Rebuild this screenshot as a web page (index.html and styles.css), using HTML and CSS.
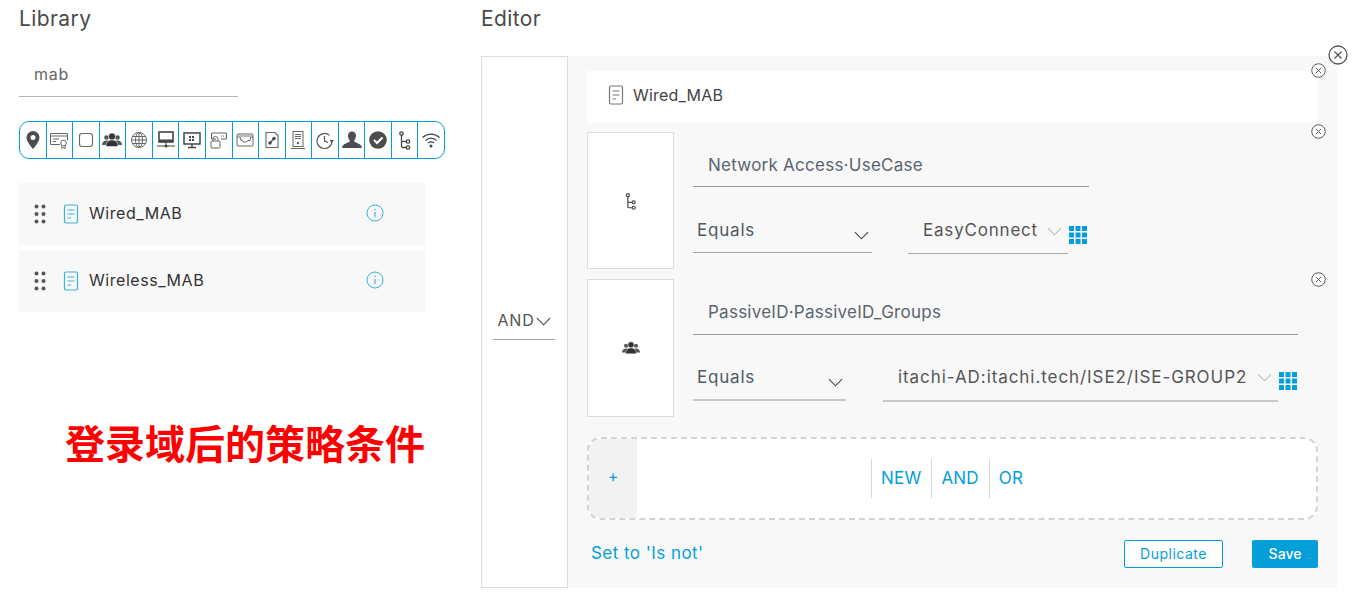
FILE: index.html
```html
<!DOCTYPE html>
<html lang="en">
<head>
  <meta charset="UTF-8">
  <meta name="viewport" content="width=device-width, initial-scale=1.0">
  <title>Conditions Studio</title>
  <link rel="stylesheet" href="styles.css">
</head>
<body>

  <svg class="sprites" width="0" height="0">
    <symbol id="i-group" viewBox="0 0 20 20">
      <circle cx="4.500" cy="7.500" r="2.300" fill="#555"/>
      <circle cx="15.500" cy="7.500" r="2.300" fill="#555"/>
      <path d="M0 15c0-3 2-4.500 4.500-4.500S8 12 8 15z" fill="#555"/>
      <path d="M12 15c0-3 1-4.500 3.500-4.500S20 12 20 15z" fill="#555"/>
      <circle cx="10" cy="6.500" r="3.400" fill="#333" stroke="#fff" stroke-width=".5"/>
      <path d="M4 16.500c0-4.500 2.500-6.500 6-6.500s6 2 6 6.500z" fill="#333" stroke="#fff" stroke-width=".5"/>
    </symbol>
    <symbol id="i-branch" viewBox="0 0 20 20">
      <g fill="none" stroke="#444" stroke-width="1.300">
        <path d="M6.500 5v11c0 1 .5 1.500 1.500 1.500h3.500"/>
        <path d="M6.500 11.500h5"/>
        <circle cx="6.500" cy="3.500" r="1.700"/>
        <circle cx="13" cy="11.500" r="1.700"/>
        <circle cx="13" cy="17.500" r="1.700"/>
      </g>
    </symbol>
    <symbol id="i-doc" viewBox="0 0 16 20">
      <rect x="1.500" y="1" width="13" height="18" rx="1.500" fill="none" stroke="currentColor" stroke-width="1.200"/>
      <path d="M4.500 6h7M4.500 10h7M4.500 14h3.500" stroke="currentColor" stroke-width="1.200" fill="none"/>
    </symbol>
    <symbol id="i-grid" viewBox="0 0 18 18">
      <g fill="#049fd9">
        <rect x="0" y="0" width="5" height="5"/><rect x="6.500" y="0" width="5" height="5"/><rect x="13" y="0" width="5" height="5"/>
        <rect x="0" y="6.500" width="5" height="5"/><rect x="6.500" y="6.500" width="5" height="5"/><rect x="13" y="6.500" width="5" height="5"/>
        <rect x="0" y="13" width="5" height="5"/><rect x="6.500" y="13" width="5" height="5"/><rect x="13" y="13" width="5" height="5"/>
      </g>
    </symbol>
    <symbol id="i-close" viewBox="0 0 20 20">
      <circle cx="10" cy="10" r="9" fill="#fff" stroke="#555" stroke-width="1.300"/>
      <path d="M6.500 6.500l7 7M13.500 6.500l-7 7" stroke="#555" stroke-width="1.300"/>
    </symbol>
    <symbol id="i-info" viewBox="0 0 18 18">
      <circle cx="9" cy="9" r="8" fill="none" stroke="#39b3e2" stroke-width="1"/>
      <path d="M9 8v5" stroke="#39b3e2" stroke-width="1.200"/>
      <circle cx="9" cy="5.500" r=".8" fill="#39b3e2"/>
    </symbol>
    <symbol id="i-chev" viewBox="0 0 16 9">
      <path d="M1 1l7 7 7-7" fill="none" stroke="currentColor" stroke-width="1.200"/>
    </symbol>
    <symbol id="i-drag" viewBox="0 0 12 20">
      <g fill="#555">
        <circle cx="2.500" cy="2.500" r="2"/><circle cx="9.500" cy="2.500" r="2"/>
        <circle cx="2.500" cy="10" r="2"/><circle cx="9.500" cy="10" r="2"/>
        <circle cx="2.500" cy="17.500" r="2"/><circle cx="9.500" cy="17.500" r="2"/>
      </g>
    </symbol>
  </svg>

  <div class="library">
    <h2>Library</h2>
    <div class="search">mab</div>

    <div class="toolbar">
      <!-- location -->
      <span><svg viewBox="0 0 20 20"><path fill-rule="evenodd" d="M10 1a6.500 6.500 0 0 0-6.500 6.500C3.500 12 10 19 10 19s6.500-7 6.500-11.500A6.500 6.500 0 0 0 10 1zm0 4a2.500 2.500 0 1 1 0 5 2.500 2.500 0 0 1 0-5z" fill="#4d4d4d"/></svg></span>
      <!-- certificate -->
      <span><svg viewBox="0 0 20 20"><g fill="none" stroke="#666" stroke-width="1"><path d="M11 14.500H1.500v-11h17v7"/><path d="M1.500 6h17M4 9h6M4 11.500h3"/><circle cx="14.500" cy="13" r="2.800"/><path d="M12.800 15.500v3l1.700-1 1.700 1v-3"/></g></svg></span>
      <!-- endpoint -->
      <span><svg viewBox="0 0 20 20"><rect x="3.500" y="3.500" width="13" height="13" rx="2.500" fill="none" stroke="#666" stroke-width="1.100"/></svg></span>
      <span><svg viewBox="0 0 20 20"><use href="#i-group"/></svg></span>
      <!-- globe -->
      <span><svg viewBox="0 0 20 20"><g fill="none" stroke="#666" stroke-width="1"><circle cx="10" cy="10" r="7.500"/><ellipse cx="10" cy="10" rx="3.500" ry="7.500"/><path d="M10 2.500v15M2.500 10h15M3.500 6.500h13M3.500 13.500h13"/></g></svg></span>
      <!-- device with network -->
      <span><svg viewBox="0 0 20 20"><rect x="3" y="2" width="14" height="10" fill="none" stroke="#444" stroke-width="1.600"/><rect x="3" y="9.500" width="14" height="2.500" fill="#444"/><path d="M10 12v5M1 16h18" stroke="#444"/><circle cx="10" cy="16" r="1.500" fill="#444"/></svg></span>
      <!-- desktop -->
      <span><svg viewBox="0 0 20 20"><rect x="2" y="3" width="16" height="11" fill="none" stroke="#444" stroke-width="1.500"/><path d="M10 14v3M6 17.500h8" stroke="#444" stroke-width="1.400"/><g fill="#444"><rect x="7" y="6" width="2" height="2"/><rect x="10" y="6" width="2" height="2"/><rect x="7" y="9" width="2" height="2"/><rect x="10" y="9" width="2" height="2"/></g></svg></span>
      <!-- lock + message -->
      <span><svg viewBox="0 0 20 20"><g fill="none" stroke="#666" stroke-width="1"><path d="M7 9H2.500V3h15v6H12"/><rect x="2" y="11" width="9" height="7" rx="1"/><path d="M4 11V9a2.500 2.500 0 0 1 5 0v2"/></g><path d="M12 6h4" stroke="#666" stroke-dasharray="1 1"/></svg></span>
      <!-- ethernet -->
      <span><svg viewBox="0 0 20 20"><g fill="none" stroke="#666" stroke-width="1"><rect x="2" y="4" width="16" height="12" rx="1"/><path d="M2 7h3M18 7h-3M5 7l1 3.500h1.500l1 1.500h3l1-1.500H15l1-3.500"/></g><rect x="3" y="5" width="14" height="2" fill="#bbb"/></svg></span>
      <!-- document link -->
      <span><svg viewBox="0 0 20 20"><path d="M4 2.500h9l3 3v12H4z" fill="none" stroke="#666" stroke-width="1.100"/><circle cx="8" cy="13" r="1.700" fill="#444"/><circle cx="12" cy="8.500" r="1.700" fill="#444"/><path d="M8 13l4-4.500" stroke="#444" stroke-width="1.200"/></svg></span>
      <!-- server -->
      <span><svg viewBox="0 0 20 20"><g fill="none" stroke="#666" stroke-width="1"><rect x="5" y="1.500" width="10" height="15"/><path d="M3 18.500h14M7 4.500h6M7 6.500h6M7 8.500h6"/></g><circle cx="10" cy="13" r="1.300" fill="#666"/></svg></span>
      <!-- time -->
      <span><svg viewBox="0 0 20 20"><g fill="none" stroke="#555" stroke-width="1.200"><path d="M17 11a7.500 7.500 0 1 1-2.500-5.600"/><path d="M9.500 6v5l3.500 1.500"/></g><path d="M14.500 10H19l-2.200 2.800z" fill="#555"/></svg></span>
      <!-- user -->
      <span><svg viewBox="0 0 20 20"><path d="M10 1.500c-2.600 0-4 2-4 4.300 0 2 1 3.500 1.800 4.500v1.200C6 13 .5 13.500 0 18h20c-.5-4.500-6-5-7.800-6.500v-1.200c.8-1 1.800-2.500 1.800-4.500 0-2.300-1.400-4.300-4-4.300z" fill="#4d4d4d"/></svg></span>
      <!-- check -->
      <span><svg viewBox="0 0 20 20"><circle cx="10" cy="10" r="8.800" fill="#4d4d4d"/><path d="M6 10l3 3 5.500-5.500" fill="none" stroke="#fff" stroke-width="2"/></svg></span>
      <span><svg viewBox="0 0 20 20"><use href="#i-branch"/></svg></span>
      <!-- wifi -->
      <span><svg viewBox="0 0 20 20"><g fill="none" stroke="#444" stroke-width="1.300"><path d="M1.500 7.500c5-4.500 12-4.500 17 0"/><path d="M4.500 10.500c3.500-3 7.500-3 11 0"/><path d="M7 13c2-1.500 4-1.500 6 0"/></g><circle cx="10" cy="16" r="1.500" fill="#444"/></svg></span>
    </div>

    <div class="lib-item">
      <svg class="drag"><use href="#i-drag"/></svg>
      <svg class="doc"><use href="#i-doc"/></svg>
      <span class="lib-name">Wired_MAB</span>
      <svg class="info"><use href="#i-info"/></svg>
    </div>
    <div class="lib-item">
      <svg class="drag"><use href="#i-drag"/></svg>
      <svg class="doc"><use href="#i-doc"/></svg>
      <span class="lib-name">Wireless_MAB</span>
      <svg class="info"><use href="#i-info"/></svg>
    </div>

    <div class="note">登录域后的策略条件</div>
  </div>

  <div class="editor">
    <h2>Editor</h2>
    <div class="editor-box">
      <div class="operator">
        <div class="op-select">AND<svg class="chev dark"><use href="#i-chev"/></svg></div>
      </div>

      <div class="panel">
        <svg class="close big"><use href="#i-close"/></svg>

        <div class="cond-name">
          <svg class="doc gray"><use href="#i-doc"/></svg>
          <span>Wired_MAB</span>
          <svg class="close small"><use href="#i-close"/></svg>
        </div>

        <div class="rule rule-a">
          <svg class="close small"><use href="#i-close"/></svg>
          <div class="rule-icon"><svg><use href="#i-branch"/></svg></div>
          <div class="rule-body">
            <div class="attr">Network Access·UseCase</div>
            <div class="rule-line">
              <div class="select sel">Equals<svg class="chev dark"><use href="#i-chev"/></svg></div>
              <div class="select val">EasyConnect<svg class="chev light"><use href="#i-chev"/></svg></div>
              <svg class="grid"><use href="#i-grid"/></svg>
            </div>
          </div>
        </div>

        <div class="rule rule-b">
          <svg class="close small"><use href="#i-close"/></svg>
          <div class="rule-icon"><svg><use href="#i-group"/></svg></div>
          <div class="rule-body">
            <div class="attr">PassiveID·PassiveID_Groups</div>
            <div class="rule-line">
              <div class="select sel">Equals<svg class="chev dark"><use href="#i-chev"/></svg></div>
              <div class="select val">itachi-AD:itachi.tech/ISE2/ISE-GROUP2<svg class="chev light"><use href="#i-chev"/></svg></div>
              <svg class="grid"><use href="#i-grid"/></svg>
            </div>
          </div>
        </div>

        <div class="add-box">
          <div class="add-plus">+</div>
          <div class="add-links">
            <a>NEW</a>
            <a>AND</a>
            <a>OR</a>
          </div>
        </div>

        <div class="actions">
          <a class="set-not">Set to 'Is not'</a>
          <button class="btn outline">Duplicate</button>
          <button class="btn solid">Save</button>
        </div>
      </div>
    </div>
  </div>

</body>
</html>
```

FILE: styles.css
```css
body {
  margin: 0;
  font-family: Inter, "Liberation Sans", sans-serif;
  background-color: #fff;
  color: #444;
  display: flex;
  height: 609px;
  overflow: hidden;
}
h2 {
  margin: 0;
  padding-top: 1px;
  font-size: 21px;
  font-weight: 400;
  line-height: 23px;
  letter-spacing: .4px;
  color: #4a4a4a;
}
.sprites {
  position: absolute;
}

/* library */
.library {
  width: 481px;
  box-sizing: border-box;
  padding: 6px 0 0 19px;
}
.search {
  width: 204px;
  margin-top: 21px;
  padding: 13px 0 12px 15px;
  border-bottom: 1px solid #b5b5b5;
  font-size: 16px;
  line-height: 20px;
  letter-spacing: .8px;
  color: #666;
}
.toolbar {
  display: flex;
  width: 426px;
  height: 38px;
  margin-top: 24px;
  box-sizing: border-box;
  border: 1px solid #049fd9;
  border-radius: 10px;
}
.toolbar span {
  flex: 1;
  display: flex;
  align-items: center;
  justify-content: center;
  border-left: 1px solid #049fd9;
}
.toolbar span:first-child {
  border-left: none;
}
.toolbar svg {
  width: 20px;
  height: 20px;
}
.lib-item {
  display: flex;
  align-items: center;
  width: 406px;
  height: 62px;
  margin-bottom: 5px;
  box-sizing: border-box;
  padding: 0 0 0 15px;
  background-color: #f8f8f8;
}
.toolbar + .lib-item {
  margin-top: 24px;
}
.drag {
  width: 12px;
  height: 20px;
}
.doc {
  width: 16px;
  height: 20px;
  margin-left: 17px;
  color: #39b3e2;
}
.lib-name {
  margin: 0 0 2px 10px;
  width: 277px;
  font-size: 16px;
  letter-spacing: .55px;
  color: #333;
}
.info {
  width: 18px;
  height: 18px;
  margin-bottom: 2px;
}
.note {
  margin: 105px 0 0 46px;
  font-family: "Noto Sans CJK SC", sans-serif;
  font-size: 40px;
  font-weight: 700;
  line-height: 50px;
  color: #f00;
  white-space: nowrap;
}

/* editor */
.editor {
  width: 856px;
  padding-top: 6px;
}
.editor-box {
  display: flex;
  height: 532px;
  margin-top: 26px;
}
.operator {
  width: 87px;
  box-sizing: border-box;
  padding: 0 2px 4px 0;
  border: 1px solid #ddd;
  display: flex;
  align-items: center;
  justify-content: center;
}
.op-select {
  display: flex;
  align-items: center;
  width: 62px;
  box-sizing: border-box;
  height: 40px;
  padding-left: 5px;
  border-bottom: 1px solid #aaa;
  font-size: 16px;
  letter-spacing: .8px;
  color: #555;
}
.op-select .chev {
  margin: 4px 0 0 1px;
}
.panel {
  position: relative;
  flex: 1;
  box-sizing: border-box;
  padding: 15px 19px 0;
  background-color: #f8f8f8;
}
.cond-name {
  position: relative;
  display: flex;
  align-items: center;
  height: 52px;
  box-sizing: border-box;
  padding: 0 0 4px 21px;
  background-color: #fff;
  font-size: 16px;
  letter-spacing: .2px;
  color: #444;
}
.cond-name .doc {
  margin: 0 9px 0 0;
}
.doc.gray {
  color: #777;
}
.close {
  position: absolute;
}
.close.big {
  width: 20px;
  height: 20px;
  top: -11px;
  right: -11px;
  z-index: 2;
}
.close.small {
  width: 15px;
  height: 15px;
  top: -8px;
  right: -8px;
  z-index: 2;
}
.rule {
  position: relative;
  display: flex;
}
.rule-icon {
  width: 87px;
  box-sizing: border-box;
  border: 1px solid #ddd;
  background-color: #fff;
  display: flex;
  align-items: center;
  justify-content: center;
}
.rule-icon svg {
  width: 18px;
  height: 18px;
}
.rule-body {
  margin-left: 19px;
  flex: 1;
}
.attr {
  box-sizing: border-box;
  padding: 21px 0 0 15px;
  border-bottom: 1px solid #999;
  font-size: 17px;
  line-height: 24px;
  letter-spacing: .25px;
  color: #5a6570;
}
.rule-line {
  display: flex;
  align-items: flex-start;
}
.select {
  position: relative;
  box-sizing: border-box;
  padding-left: 4px;
  border-bottom: 1px solid #aaa;
  font-size: 17px;
  line-height: 24px;
  letter-spacing: .8px;
  color: #4f5a66;
  white-space: nowrap;
}
.val {
  padding-left: 15px;
  color: #555;
}
.chev {
  width: 15px;
  height: 9px;
}
.select .chev {
  position: absolute;
  right: 3px;
}
.chev.dark {
  color: #444;
}
.chev.light {
  color: #bbb;
}
.select .chev.light {
  right: 6px;
}
.grid {
  width: 18px;
  height: 18px;
  margin-left: 1px;
}

/* the two conditions are not the same size in the form */
.rule-a {
  margin-top: 9px;
  height: 137px;
}
.rule-a .attr {
  width: 396px;
  height: 55px;
}
.rule-a .rule-line {
  margin-top: 22px;
}
.rule-a .select {
  height: 44px;
  padding-top: 9px;
}
.rule-a .sel {
  width: 179px;
}
.rule-a .val {
  width: 160px;
  height: 45px;
  margin-left: 36px;
}
.rule-a .chev.dark {
  top: 22px;
}
.rule-a .chev.light {
  top: 18px;
}
.rule-a .grid {
  margin-top: 17px;
}
.rule-b {
  margin-top: 10px;
  height: 138px;
}
.rule-b .close.small {
  top: -7px;
}
.rule-b .attr {
  width: 605px;
  height: 56px;
}
.rule-b .rule-line {
  margin-top: 30px;
}
.rule-b .select {
  height: 36px;
  border-bottom: 2px solid #c8c8c8;
}
.rule-b .sel {
  width: 153px;
}
.rule-b .val {
  width: 395px;
  height: 37px;
  margin-left: 37px;
  letter-spacing: .93px;
}
.rule-b .chev.dark {
  top: 13px;
}
.rule-b .chev.light {
  top: 8px;
}
.rule-b .grid {
  margin-top: 7px;
}

.add-box {
  display: flex;
  height: 83px;
  margin-top: 20px;
  box-sizing: border-box;
  border: 2px dashed #d4d4d4;
  border-radius: 14px;
  background-color: #fff;
  overflow: hidden;
}
.add-plus {
  width: 48px;
  padding-top: 27px;
  background-color: #f2f2f2;
  text-align: center;
  font-size: 16px;
  color: #049fd9;
}
.add-links {
  display: flex;
  align-items: center;
  margin-left: 234px;
}
.add-links a {
  height: 39px;
  line-height: 39px;
  padding: 0 10px 0 9px;
  border-left: 1px solid #d8d8d8;
  font-size: 17px;
  letter-spacing: .2px;
  color: #049fd9;
}
.actions {
  display: flex;
  align-items: center;
  margin-top: 20px;
  height: 28px;
}
.set-not {
  margin: 0 auto 2px 4px;
  font-size: 17px;
  letter-spacing: .45px;
  color: #049fd9;
}
.btn {
  height: 28px;
  box-sizing: border-box;
  padding-bottom: 2px;
  border-radius: 2px;
  font-family: inherit;
  font-size: 14px;
  letter-spacing: .5px;
  cursor: pointer;
}
.btn.outline {
  width: 99px;
  background-color: #fff;
  border: 1px solid #049fd9;
  color: #049fd9;
}
.btn.solid {
  width: 66px;
  margin-left: 29px;
  background-color: #049fd9;
  border: none;
  color: #fff;
  font-weight: 500;
  letter-spacing: 0;
}
```
